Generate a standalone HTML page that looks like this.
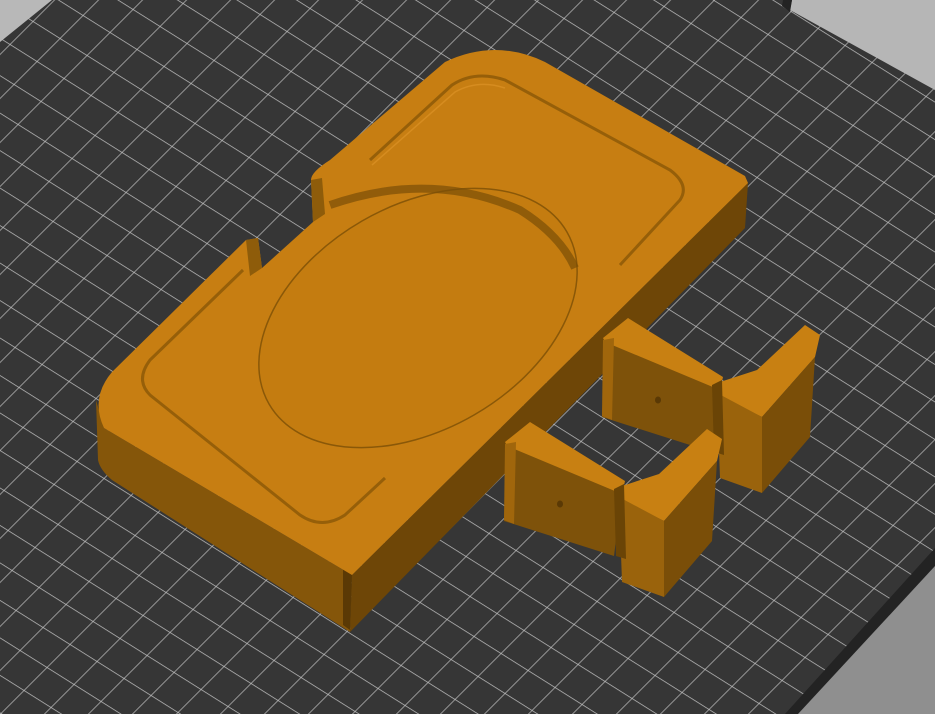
<!DOCTYPE html>
<html><head><meta charset="utf-8"><style>
html,body{margin:0;padding:0;background:#363636;}
svg{display:block;}
</style></head><body>
<svg width="935" height="714" viewBox="0 0 935 714" xmlns="http://www.w3.org/2000/svg">
<defs>
<pattern id="g" width="100" height="100" patternUnits="userSpaceOnUse" patternTransform="matrix(0.27,0.17,-0.23,0.23,6,4)">
<path d="M0 0H100M0 0V100" stroke="#d6d6d6" stroke-width="4.5" fill="none"/>
</pattern>
</defs>
<rect width="935" height="714" fill="#363636"/>
<rect width="935" height="714" fill="url(#g)" opacity="0.85"/>
<polygon points="0,0 52,0 0,42" fill="#b8b8b8"/>
<polygon points="792,0 935,0 935,90 790,10" fill="#b6b6b6"/>
<polygon points="783,0 792,0 790,12 782,6" fill="#232323"/>
<polygon points="935,548 935,570 800,714 785,714" fill="#232323"/>
<polygon points="935,566 935,714 798,714" fill="#8f8f8f"/>

<path d="M96,400 L98,460 Q100,470 112,480 L350,632 L352,575 L104,428 Z" fill="#85560a"/>
<path d="M350,632 L745,228 L748,183 L352,575 Z" fill="#6e4607"/>
<path d="M343,566 L343,625 L350,630 L352,575 Z" fill="#5a3905"/>
<path d="M311,180 L313,222 L262,268 L258,238 L246,240 L112,372 Q90,398 104,428 L352,575 L748,183 L745,176 L545,62 Q495,38 445,62 L330,160 Q311,172 311,180 Z" fill="#c77e12"/>
<path d="M311,180 L313,222 L325,214 L322,178 Z" fill="#8e5c0a"/>
<path d="M246,240 L250,276 L262,268 L258,238 Z" fill="#8e5c0a"/>
<path d="M370,160 L452,85 Q475,70 505,80 L670,170 Q690,185 680,200 L620,265" fill="none" stroke="#8a5808" stroke-width="3" opacity="0.8"/>
<path d="M372,165 L455,92 Q478,79 505,88" fill="none" stroke="#e0962a" stroke-width="1.5" opacity="0.6"/>
<path d="M243,270 L150,360 Q135,380 150,395 L300,515 Q322,530 345,515 L385,478" fill="none" stroke="#8a5808" stroke-width="3" opacity="0.8"/>
<ellipse cx="418" cy="318" rx="172" ry="112" transform="rotate(-30 418 318)" fill="#c47c10" stroke="#8a5808" stroke-width="1.5"/>
<path d="M330,205 Q430,170 520,210 Q560,235 575,268" fill="none" stroke="#7a4e07" stroke-width="8" opacity="0.7"/>

<g id="clip">
<polygon points="605,340 720,388 712,452 602,417" fill="#7e520a"/>
<polygon points="603,338 628,318 723,377 720,390 605,342" fill="#c88012"/>
<polygon points="603,340 614,338 612,420 602,416" fill="#a0660c"/>
<polygon points="720,382 757,370 805,325 820,335 815,357 762,417 720,397" fill="#c88012"/>
<polygon points="717,393 762,417 762,493 720,478" fill="#9a630c"/>
<polygon points="762,417 815,357 810,437 762,493" fill="#7a4e08"/>
<polygon points="712,385 722,380 724,455 714,452" fill="#6a4406"/>
<ellipse cx="658" cy="400" rx="3" ry="3.5" fill="#5a3905"/>
</g>
<use href="#clip" transform="translate(-98,104)"/>
</svg>
</body></html>
